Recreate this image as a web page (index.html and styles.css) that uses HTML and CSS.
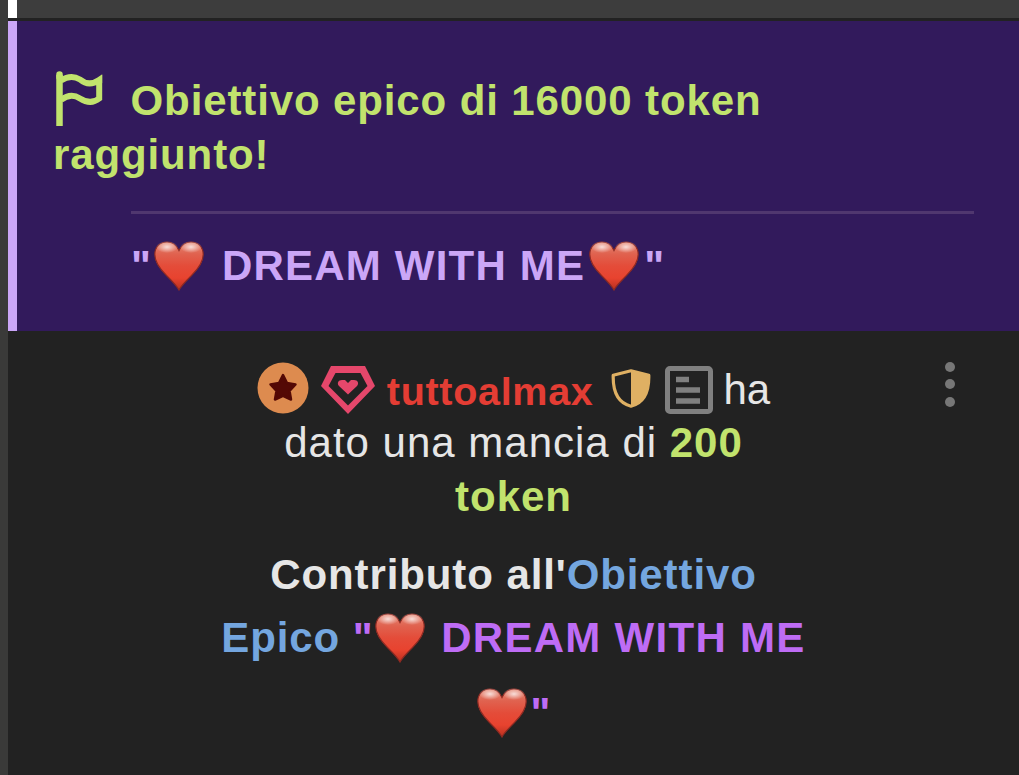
FILE: index.html
```html
<!DOCTYPE html>
<html lang="it">
<head>
    <meta charset="UTF-8">
    <meta name="viewport" content="width=device-width, initial-scale=1.0">
    <title>Chat</title>
    <link rel="stylesheet" href="styles.css">
</head>
<body>
    <!-- shared heart -->
    <svg class="defs" aria-hidden="true">
        <defs>
            <linearGradient id="heartFill" x1="0" y1="0" x2="0" y2="1">
                <stop offset="0" stop-color="#e58a76"/>
                <stop offset="0.25" stop-color="#e0624f"/>
                <stop offset="0.5" stop-color="#e44c39"/>
                <stop offset="0.75" stop-color="#e8432f"/>
                <stop offset="1" stop-color="#b8301f"/>
            </linearGradient>
            <radialGradient id="heartShine">
                <stop offset="0" stop-color="#fff" stop-opacity="0.75"/>
                <stop offset="1" stop-color="#fff" stop-opacity="0"/>
            </radialGradient>
            <symbol id="heart" viewBox="0 0 50 50">
                <path d="M25 49C23 45 18.500 40.500 12.500 34.500C5 27 .8 21 .8 13.500C.8 6 6 1 13 1C18.500 1 22.500 4 25 9.500C27.500 4 31.500 1 37 1C44 1 49.200 6 49.200 13.500C49.200 21 45 27 37.500 34.500C31.500 40.500 27 45 25 49Z" fill="url(#heartFill)" stroke="#8f2a22" stroke-width="1.200"/>
                <ellipse cx="13" cy="6" rx="11" ry="6" fill="url(#heartShine)"/>
                <ellipse cx="37" cy="6" rx="11" ry="6" fill="url(#heartShine)"/>
            </symbol>
        </defs>
    </svg>

    <div class="chat">
        <div class="previous"></div>

        <div class="goal">
            <div class="goal-title">
                <svg class="flag" viewBox="0 0 50 56">
                    <path d="M6.500 55V4" stroke-width="6.500"/>
                    <path d="M6.500 4V1.500" stroke-width="6.500" stroke-linecap="round" transform="translate(0 2)"/>
                    <path d="M8 9.500C15 5 21 5 27 8.500C33 13.500 39 14 46.200 9V27.500C40 32.500 34 32 27 27.500C21 23.500 15 23.500 8 29" stroke-width="6"/>
                    <path class="solid" d="M42 10L49.200 4V12Z"/>
                </svg>
                <span>Obiettivo epico di 16000 token</span><br>raggiunto!
            </div>
            <div class="goal-name">"<svg class="heart"><use href="#heart"/></svg> DREAM WITH ME<svg class="heart"><use href="#heart"/></svg>"</div>
        </div>

        <div class="tip">
            <div class="tip-body">
                <div class="tip-user">
                    <svg class="star" viewBox="0 0 52 52">
                        <circle cx="26" cy="26" r="25.500" fill="#dd8b4f"/>
                        <path d="M26 13L30 21L38.500 22.500L32.500 28.800L34 37.500L26 33.800L18 37.500L19.500 28.800L13.500 22.500L22 21Z" fill="#540905" stroke="#540905" stroke-width="2.500" stroke-linejoin="round"/>
                    </svg>
                    <svg class="gem" viewBox="0 0 54 48">
                        <path d="M10 0H44L54 20L27 48L0 20ZM14.500 7L7.500 20L27 39.500L46.500 20L39.500 7Z" fill="#e5476b" fill-rule="evenodd"/>
                        <path d="M27 28.500L18 20C15.500 17 17.500 14 21 14H24L27 17L30 14H33C36.500 14 38.500 17 36 20Z" fill="#e5476b"/>
                    </svg>
                    <strong class="name">tuttoalmax</strong>
                    <svg class="shield" viewBox="0 0 40 40">
                        <path d="M20 1.800L37.800 6.300C38.200 23 33 34 20 37.200C7 34 1.800 23 2.200 6.300Z" fill="none" stroke="#dfb063" stroke-width="3.200" stroke-linejoin="round"/>
                        <path d="M20 2L38 6C38 23 33 34 20 37Z" fill="#dfb063"/>
                    </svg>
                    <svg class="notes" viewBox="0 0 48 48">
                        <rect x="2.500" y="2.500" width="43" height="43" rx="2.500" fill="none" stroke="#808080" stroke-width="5"/>
                        <path d="M11 13.500H24M11 24H35M11 35H35" stroke="#808080" stroke-width="5.500"/>
                    </svg>
                    <span class="verb">ha</span>
                </div>
                <div class="tip-line">dato una mancia di <strong class="tokens">200</strong></div>
                <div class="tip-line"><strong class="tokens">token</strong></div>
                <div class="contribution">
                    <div>Contributo all'<span class="link">Obiettivo</span></div>
                    <div><span class="link">Epico</span> <span class="dream">"<svg class="heart"><use href="#heart"/></svg> <span class="caps">DREAM WITH ME</span></span></div>
                    <div class="last"><span class="dream"><svg class="heart"><use href="#heart"/></svg>"</span></div>
                </div>
            </div>
            <div class="menu"><i></i><i></i><i></i></div>
        </div>
    </div>
</body>
</html>
```

FILE: styles.css
```css
* {
    box-sizing: border-box;
}
body {
    margin: 0;
    height: 775px;
    overflow: hidden;
    background: #3a3a39;
    font-family: "Liberation Sans", Arial, sans-serif;
    font-size: 42px;
    letter-spacing: 1px;
    color: #e6e6e6;
}
.defs {
    position: absolute;
    width: 0;
    height: 0;
}
.chat {
    margin-left: 8px;
    height: 775px;
    display: flex;
    flex-direction: column;
    background: #222;
}
.previous {
    height: 18px;
    background: #3d3d3d;
    border-left: 9px solid #fff;
}
.goal {
    height: 310px;
    margin-top: 3px;
    padding: 50px 45px 0 36px;
    background: #321a5c;
    border-left: 9px solid #cba6f7;
    font-weight: bold;
}
.goal-title {
    line-height: 54px;
    letter-spacing: 0.88px;
    color: #c1e36d;
    white-space: nowrap;
}
.flag {
    width: 50px;
    height: 56px;
    margin: 0 15px 0 0;
    vertical-align: -12px;
    fill: none;
    stroke: #c1e36d;
}
.flag .solid {
    fill: #c1e36d;
    stroke: none;
}
.goal-name {
    margin: 29px 0 0 78px;
    border-top: 3px solid #50376f;
    line-height: 54px;
    padding-top: 25px;
    letter-spacing: 1.2px;
    color: #cba6f7;
    white-space: nowrap;
}
.heart {
    width: 50px;
    height: 50px;
    vertical-align: -11px;
    margin: 0 4px 0 3px;
}
.goal-name .heart {
    margin: 0 5px 0 2px;
}
.goal-name .heart:last-child {
    margin-left: 4px;
}
.tip {
    flex: 1;
    margin-top: 3px;
    display: grid;
    grid-template-columns: 1fr 620px 1fr;
    padding-top: 28px;
}
.tip-body {
    grid-column: 2;
    text-align: center;
    white-space: nowrap;
}
.tip-user {
    display: flex;
    justify-content: center;
    align-items: center;
    height: 54px;
    line-height: 54px;
}
.star {
    width: 52px;
    height: 52px;
    margin-top: -2px;
}
.gem {
    width: 54px;
    height: 48px;
    margin: 2px 12px 0;
}
.name {
    color: #e43d34;
    font-size: 39.5px;
    letter-spacing: 0.7px;
    padding-top: 3px;
}
.shield {
    width: 40px;
    height: 40px;
    margin: 0 14px 0 17px;
}
.notes {
    width: 48px;
    height: 48px;
    margin: 2px 11px 0 0;
}
.verb {
    letter-spacing: 0;
    padding-top: 1px;
}
.tip-line {
    line-height: 54px;
}
.tokens {
    color: #c1e36d;
}
.contribution {
    margin-top: 19px;
    font-weight: bold;
    line-height: 63px;
    letter-spacing: 0.9px;
}
.contribution .last {
    margin-top: 12px;
}
.contribution .caps {
    letter-spacing: 1.3px;
}
.link {
    color: #74a6df;
}
.dream {
    color: #be6cf5;
}
.dream .heart {
    margin-left: 1px;
}
.menu {
    display: flex;
    flex-direction: column;
    gap: 8px;
    align-items: center;
    padding: 0 0 0 58px;
}
.menu i {
    width: 10px;
    height: 10px;
    margin-top: -0.5px;
    border-radius: 50%;
    background: #777;
}
```
